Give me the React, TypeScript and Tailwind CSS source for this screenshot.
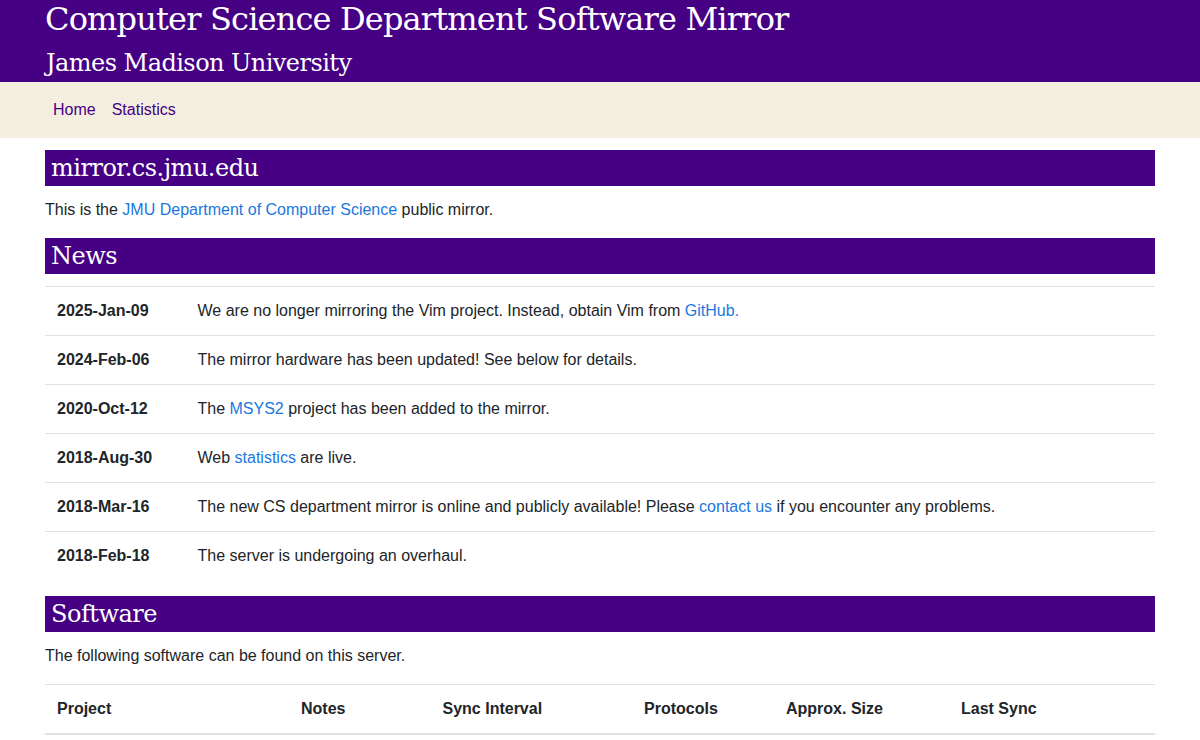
const news: { date: string; body: React.ReactNode }[] = [
  { date: "2025-Jan-09", body: <>We are no longer mirroring the Vim project. Instead, obtain Vim from <a className="text-[#1a78e0]" href="#">GitHub.</a></> },
  { date: "2024-Feb-06", body: <>The mirror hardware has been updated! See below for details.</> },
  { date: "2020-Oct-12", body: <>The <a className="text-[#1a78e0]" href="#">MSYS2</a> project has been added to the mirror.</> },
  { date: "2018-Aug-30", body: <>Web <a className="text-[#1a78e0]" href="#">statistics</a> are live.</> },
  { date: "2018-Mar-16", body: <>The new CS department mirror is online and publicly available! Please <a className="text-[#1a78e0]" href="#">contact us</a> if you encounter any problems.</> },
  { date: "2018-Feb-18", body: <>The server is undergoing an overhaul.</> },
];

const columns = [
  { label: "Project", width: "w-[244px]" },
  { label: "Notes", width: "w-[141.5px]" },
  { label: "Sync Interval", width: "w-[201.5px]" },
  { label: "Protocols", width: "w-[142px]" },
  { label: "Approx. Size", width: "w-[175px]" },
  { label: "Last Sync", width: "flex-1" },
];

function Heading({ children }: { children: React.ReactNode }) {
  return (
    <h2 className="h-9 bg-[#450084] px-[6px] font-['DejaVu_Serif',serif] text-[24px] leading-[36px] tracking-[-0.5px] text-white">
      {children}
    </h2>
  );
}

export default function App() {
  return (
    <div className="h-[740px] overflow-hidden bg-white font-['Liberation_Sans',sans-serif] text-[16px] leading-6 text-[#212529]">
      <header className="h-[82px] bg-[#450084] px-[45px] font-['DejaVu_Serif',serif] text-white">
        <h1 className="text-[32px] leading-[38px] tracking-[-0.83px]">Computer Science Department Software Mirror</h1>
        <p className="mt-[6px] pl-px text-[24px] leading-[38px] tracking-[-0.54px]">James Madison University</p>
      </header>

      <nav className="flex h-14 items-center bg-[#f4eee0] px-[45px] text-[#450084]">
        <a className="px-2" href="#">Home</a>
        <a className="px-2" href="#">Statistics</a>
      </nav>

      <main className="px-[45px] pt-3">
        <Heading>mirror.cs.jmu.edu</Heading>
        <p className="mt-3">
          This is the <a className="text-[#1a78e0]" href="#">JMU Department of Computer Science</a> public mirror.
        </p>

        <div className="mt-4">
          <Heading>News</Heading>
        </div>
        <div className="mt-3">
          {news.map((item) => (
            <div key={item.date} className="flex h-[49px] items-center border-t border-[#dee2e6] px-3">
              <strong className="w-[140.5px] font-bold">{item.date}</strong>
              <span>{item.body}</span>
            </div>
          ))}
        </div>

        <div className="mt-4">
          <Heading>Software</Heading>
        </div>
        <p className="mt-3">The following software can be found on this server.</p>

        <div className="mt-4 flex h-[51px] items-center border-t border-b-2 border-t-[#dee2e6] border-b-[#dee2e6] px-3 font-bold">
          {columns.map((col) => (
            <div key={col.label} className={col.width}>{col.label}</div>
          ))}
        </div>
      </main>
    </div>
  );
}
